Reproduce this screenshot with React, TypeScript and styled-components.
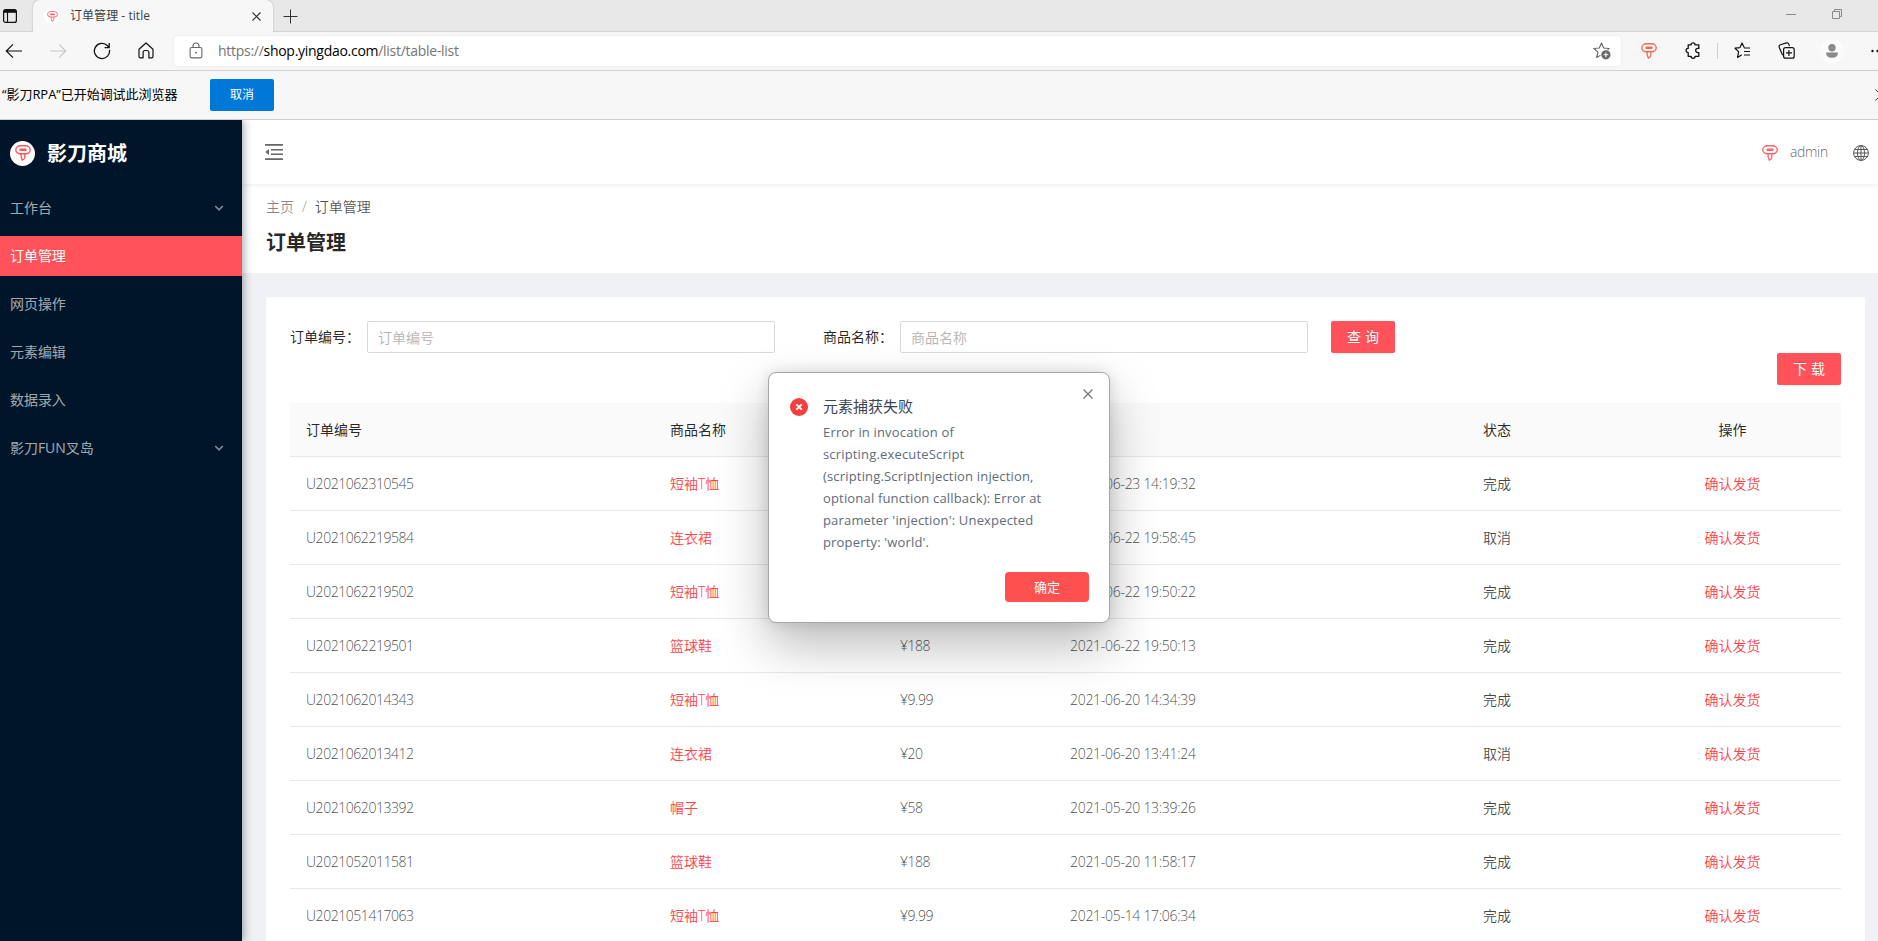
import React from 'react';
import styled, { createGlobalStyle, css } from 'styled-components';

const GlobalStyle = createGlobalStyle`
  *, *::before, *::after { box-sizing: border-box; }
  html, body { margin: 0; padding: 0; }
  body {
    width: 1878px;
    height: 941px;
    overflow: hidden;
    background: #fff;
    font-family: 'Open Sans', 'Noto Sans CJK SC', sans-serif;
    font-size: 14px;
    color: rgba(0, 0, 0, 0.65);
  }
  button { font: inherit; border: 0; padding: 0; margin: 0; }
  svg { display: block; flex: none; }
`;

const Window = styled.div`
  position: relative;
  display: flex;
  flex-direction: column;
  width: 1878px;
  height: 941px;
  overflow: hidden;
`;

/* ---------- browser chrome ---------- */

const TabStrip = styled.div`
  display: flex;
  align-items: center;
  height: 32px;
  flex: none;
  background: #e8e8e8;
  box-shadow: inset 0 -1px 0 #d3d3d3;
  padding-left: 3px;
`;

const Tab = styled.div`
  display: flex;
  align-items: center;
  width: 240px;
  height: 32px;
  margin-left: 16px;
  padding: 0 12px 0 11px;
  background: #f7f7f7;
  border-radius: 7px 7px 0 0;
  box-shadow: 0 0 2px rgba(0, 0, 0, 0.28);
  clip-path: inset(0 -3px 0 -3px);
`;

const TabIcon = styled.span`
  display: grid;
  place-items: center;
  width: 16px;
  height: 16px;
  border-radius: 50%;
  background: #fff;
`;

const TabTitle = styled.span`
  flex: 1;
  margin-left: 10px;
  font-size: 12px;
  line-height: 16px;
  letter-spacing: 0.05px;
  color: #3f3f3f;
`;

const NewTab = styled.span`
  margin-left: 10px;
`;

const WindowButtons = styled.div`
  display: flex;
  align-items: center;
  gap: 36px;
  margin-left: auto;
  margin-right: 36px;
  padding-bottom: 4px;
`;

const Toolbar = styled.div`
  display: flex;
  align-items: center;
  height: 39px;
  flex: none;
  padding: 0 0 1px 5px;
  background: #f7f7f7;
  border-bottom: 1px solid #d0d0d0;
`;

const NavButtons = styled.div`
  display: flex;
  align-items: center;
  gap: 26px;
  width: 169px;
  svg:last-child { margin-left: 1px; }
`;

const AddressBar = styled.div`
  display: flex;
  align-items: center;
  width: 1447px;
  height: 30px;
  padding: 0 10px 0 15px;
  border-radius: 4px;
  background: #fff;
  box-shadow: 0 0 3px rgba(0, 0, 0, 0.08);
`;

const Url = styled.span`
  flex: 1;
  margin-left: 15px;
  padding-top: 1px;
  font-size: 14px;
  line-height: 20px;
  letter-spacing: -0.28px;
  color: #757575;
  b { font-weight: 400; color: #000; }
`;

const ToolbarIcons = styled.div`
  display: flex;
  align-items: center;
  flex: 1;
  padding-left: 20px;
  overflow: hidden;
`;

const ToolSlot = styled.span<{ $w: number }>`
  display: flex;
  flex: none;
  width: ${(p) => p.$w}px;
`;

const Divider = styled.span`
  flex: none;
  width: 1px;
  height: 16px;
  margin-right: 16px;
  background: #cfcfcf;
`;

const Avatar = styled.span`
  display: grid;
  flex: none;
  place-items: center;
  width: 24px;
  height: 24px;
  margin-right: 27px;
  border-radius: 50%;
  background: #fbfbfb;
`;

const InfoBar = styled.div`
  display: flex;
  align-items: center;
  height: 49px;
  flex: none;
  padding: 0 0 1px 2px;
  background: #f7f7f7;
  border-bottom: 1px solid #cecece;
  overflow: hidden;
`;

const InfoText = styled.span`
  width: 208px;
  padding-bottom: 2px;
  font-size: 13px;
  line-height: 20px;
  letter-spacing: -0.05px;
  color: #000;
  white-space: nowrap;
`;

const StopButton = styled.button`
  width: 64px;
  height: 32px;
  padding-bottom: 2px;
  border-radius: 2px;
  background: #0078d7;
  color: #fff;
  font-size: 12px;
`;

const InfoClose = styled.span`
  margin-left: auto;
  margin-right: -9px;
`;

/* ---------- shop application ---------- */

const Shell = styled.div`
  display: flex;
  flex: 1;
  min-height: 0;
  overflow: hidden;
  font-weight: 350;
`;

const Sidebar = styled.aside`
  z-index: 1;
  flex: none;
  width: 242px;
  background: #001529;
  box-shadow: 2px 0 8px rgba(0, 21, 41, 0.35);
`;

const Brand = styled.div`
  display: flex;
  align-items: center;
  height: 64px;
  padding: 4px 0 0 10px;
  color: #fff;
  font-size: 20px;
  font-weight: 700;
  line-height: 28px;
`;

const BrandMark = styled.span`
  display: grid;
  place-items: center;
  width: 25px;
  height: 25px;
  margin: -2px 12px 0 0;
  border-radius: 50%;
  background: #fff;
`;

const MenuItem = styled.div<{ $active?: boolean }>`
  display: flex;
  align-items: center;
  justify-content: space-between;
  height: 40px;
  margin: 4px 0 8px;
  padding: 0 18px 0 10px;
  font-weight: 400;
  line-height: 22px;
  letter-spacing: -0.05px;
  color: rgba(255, 255, 255, 0.65);
  ${(p) => p.$active && css`
    color: #fff;
    background: #ff525b;
  `}
`;

const Main = styled.main`
  display: flex;
  flex-direction: column;
  flex: 1;
  min-width: 0;
  background: #f0f1f5;
`;

const Header = styled.header`
  z-index: 0;
  display: flex;
  align-items: center;
  flex: none;
  height: 64px;
  padding: 0 9px 0 23px;
  background: #fff;
  box-shadow: 0 1px 4px rgba(0, 21, 41, 0.08);
`;

const UserArea = styled.div`
  display: flex;
  align-items: center;
  margin-left: auto;
  padding-top: 1px;
`;

const UserName = styled.span`
  width: 38px;
  margin: 0 24px 0 12px;
  padding: 0 0 2px;
  box-sizing: content-box;
  line-height: 22px;
  letter-spacing: -0.35px;
  padding-right: 1px;
  white-space: nowrap;
`;

const PageHead = styled.div`
  flex: none;
  height: 89px;
  padding: 12px 24px;
  background: #fff;
`;

const Crumbs = styled.div`
  line-height: 22px;
  color: rgba(0, 0, 0, 0.47);
  i { margin: 0 8px; font-style: normal; }
  b { font-weight: 350; color: rgba(0, 0, 0, 0.7); }
`;

const PageTitle = styled.h1`
  margin: 9px 0 0;
  font-size: 20px;
  font-weight: 700;
  line-height: 32px;
  color: rgba(0, 0, 0, 0.85);
`;

const Card = styled.section`
  flex: 1;
  min-height: 0;
  margin: 24px 13px 0 24px;
  padding: 24px 24px 0;
  border-radius: 2px 2px 0 0;
  background: #fff;
  overflow: hidden;
`;

const Filters = styled.div`
  display: flex;
  height: 32px;
`;

const Field = styled.label`
  display: flex;
  align-items: center;
  width: 485px;
  margin-right: 48px;
  color: rgba(0, 0, 0, 0.85);
  line-height: 22px;
`;

const FieldLabel = styled.span`
  flex: none;
  width: 77px;
  font-weight: 400;
  white-space: nowrap;
`;

const Input = styled.input`
  flex: 1;
  min-width: 0;
  height: 32px;
  padding: 4px 10px;
  border: 1px solid #d9d9d9;
  border-radius: 2px;
  font: inherit;
  outline: none;
  &::placeholder { color: #b4b4b4; opacity: 1; }
`;

const PrimaryButton = styled.button`
  width: 64px;
  height: 32px;
  padding-bottom: 2px;
  border-radius: 2px;
  background: #ff525b;
  box-shadow: 0 2px 0 rgba(0, 0, 0, 0.04);
  color: #fff;
  font-weight: 400;
  letter-spacing: 4px;
  text-indent: 4px;
  text-shadow: 0 -1px 0 rgba(0, 0, 0, 0.12);
`;

const SearchSlot = styled.div`
  margin-left: -25px;
`;

const Actions = styled.div`
  display: flex;
  justify-content: flex-end;
  height: 50px;
`;

const Row = styled.div<{ $head?: boolean }>`
  display: grid;
  grid-template-columns: 364px 230px 170px 413px 157px 1fr;
  align-items: center;
  height: 54px;
  border-bottom: 1px solid #e8e8e8;
  line-height: 22px;
  color: rgba(0, 0, 0, 0.72);
  ${(p) => p.$head && css`
    background: #fafafa;
    border-radius: 2px 2px 0 0;
    color: rgba(0, 0, 0, 0.85);
    font-weight: 400;
  `}
`;

const Cell = styled.div<{ $link?: boolean; $center?: boolean; $track?: number }>`
  padding: 0 16px;
  text-align: ${(p) => (p.$center ? 'center' : 'left')};
  letter-spacing: ${(p) => p.$track || 0}px;
  ${(p) => p.$link && css`color: #ff424c;`}
`;

/* ---------- error dialog ---------- */

const Dialog = styled.div`
  position: absolute;
  z-index: 5;
  left: 768px;
  top: 372px;
  display: flex;
  flex-direction: column;
  width: 342px;
  height: 251px;
  padding: 22px 20px 20px 21px;
  border: 1px solid #a6a6a6;
  border-radius: 8px;
  background: #fff;
  box-shadow: 0 22px 50px rgba(0, 0, 0, 0.27), 0 0 14px rgba(0, 0, 0, 0.12);
`;

const DialogClose = styled.span`
  position: absolute;
  top: 16px;
  right: 16px;
`;

const DialogContent = styled.div`
  display: grid;
  grid-template-columns: 33px 1fr;
`;

const DialogMark = styled.span`
  padding-top: 3px;
`;

const DialogTitle = styled.div`
  height: 26px;
  font-size: 15px;
  line-height: 22px;
  color: #3c4452;
`;

const DialogText = styled.div`
  grid-column: 2;
  font-size: 13px;
  line-height: 22px;
  letter-spacing: 0.17px;
  color: #606b7c;
  white-space: pre;
`;

const ConfirmButton = styled.button`
  align-self: flex-end;
  width: 84px;
  height: 30px;
  margin-top: auto;
  padding-bottom: 2px;
  border-radius: 4px;
  background: #ff5050;
  color: #fff;
  font-size: 13px;
`;

/* ---------- icons ---------- */

const LogoIcon = ({ size = 16, color = '#ff6168' }: { size?: number; color?: string }) => (
  <svg width={size} height={size} viewBox="0 0 16 16" fill="none">
    <rect x="0.8" y="0.8" width="14.4" height="8" rx="4.6" ry="4" stroke={color} strokeWidth="1.4" />
    <rect x="4.5" y="3.5" width="7" height="2.6" rx="0.9" fill={color} />
    <path d="M6.1 8.6v2.6c0 1.700 1.100 2.400 1.300 4 1.500-.5 2.400-1.500 2.400-3V8.600" stroke={color} strokeWidth="1.3" />
  </svg>
);

const Cross = ({ size, color, width = 1.2 }: { size: number; color: string; width?: number }) => (
  <svg width={size} height={size} viewBox={`0 0 ${size} ${size}`} stroke={color} strokeWidth={width}>
    <path d={`M0.5 0.5L${size - 0.5} ${size - 0.5}M${size - 0.5} 0.5L0.5 ${size - 0.5}`} />
  </svg>
);

const TabMenuIcon = () => (
  <svg width="14" height="14" viewBox="0 0 14 14" fill="none" stroke="#111">
    <rect x="0.6" y="0.6" width="12.8" height="12.8" rx="2" strokeWidth="1.2" />
    <path d="M1 2.3h12" strokeWidth="3" />
    <path d="M4.5 3v10.5" strokeWidth="1.1" />
  </svg>
);

const PlusIcon = () => (
  <svg width="15" height="15" viewBox="0 0 15 15" stroke="#333">
    <path d="M7.5 0.5v14M0.5 7.5h14" />
  </svg>
);

const MinimizeIcon = () => (
  <svg width="10" height="10" viewBox="0 0 10 10" stroke="#8a8a8a">
    <path d="M0 5.5h10" />
  </svg>
);

const RestoreIcon = () => (
  <svg width="10" height="10" viewBox="0 0 10 10" fill="none" stroke="#8a8a8a">
    <path d="M0.5 2.5h7v7h-7zM2.5 2.5v-2h7v7h-2" />
  </svg>
);

const ArrowIcon = ({ color, flip }: { color: string; flip?: boolean }) => (
  <svg width="18" height="16" viewBox="0 0 18 16" fill="none" stroke={color} strokeWidth="1.2">
    <path d={flip ? 'M1 8h15.6M10 1.3L16.7 8 10 14.7' : 'M17 8H1.4M8 1.3L1.3 8 8 14.7'} />
  </svg>
);

const ReloadIcon = () => (
  <svg width="18" height="18" viewBox="0 0 18 18" fill="none" stroke="#111" strokeWidth="1.3">
    <path d="M16.5 7.8A7.6 7.6 0 1 1 14.5 3.7l1.5 1.7M16.2 1v4.6h-4.6" />
  </svg>
);

const HomeIcon = () => (
  <svg width="16" height="17" viewBox="0 0 16 17" fill="none" stroke="#111" strokeWidth="1.2" strokeLinejoin="round">
    <path d="M1 7.2L8 1l7 6.2v7.3a1.3 1.3 0 0 1-1.3 1.3h-2.8V10.5a2 2 0 0 0-2-2H7.1a2 2 0 0 0-2 2v5.3H2.3A1.3 1.3 0 0 1 1 14.5z" />
  </svg>
);

const LockIcon = () => (
  <svg width="14" height="17" viewBox="0 0 14 17" fill="none" stroke="#666" strokeWidth="1.1">
    <rect x="1.1" y="5.5" width="11.8" height="10.4" rx="1.6" />
    <path d="M4 5.5V4a3 3 0 0 1 6 0v1.5" />
    <circle cx="7" cy="10.7" r="0.9" fill="#666" stroke="none" />
  </svg>
);

const StarAddIcon = () => (
  <svg width="18" height="18" viewBox="0 0 18 18">
    <path
      d="M8.500 1l2.200 5 5.500.5-4.200 3.600 1.300 5.400-4.800-2.900-4.800 2.900L5 10.100.8 6.500l5.500-.5z"
      fill="none"
      stroke="#666"
      strokeWidth="1.1"
      strokeLinejoin="round"
    />
    <circle cx="12.900" cy="12.800" r="5.500" fill="#fff" />
    <circle cx="12.900" cy="12.800" r="4.600" fill="#666" />
    <path d="M12.900 10.400v4.800M10.500 12.800h4.800" stroke="#fff" strokeWidth="1.1" />
  </svg>
);

const PuzzleIcon = () => (
  <svg width="16" height="17" viewBox="0 0 16 17" fill="none" stroke="#111" strokeWidth="1.3" strokeLinejoin="round">
    <path d="M3.200 2.800h2.900a2 2 0 0 1 4 0h3.700v3.600h-1a2.100 2.100 0 0 0 0 4.200h1v3.700h-3.700a2 2 0 0 1-4 0H3.200v-3.700a2.100 2.100 0 0 1 0-4.200z" />
  </svg>
);

const FavoritesIcon = () => (
  <svg width="17" height="17" viewBox="0 0 17 17" fill="none" stroke="#111" strokeWidth="1.2" strokeLinejoin="round">
    <path d="M10.200 5.400L8 1 6 5.600l-5 .6 3.600 3.400-1 5.800 4.200-2.700M10 6h6M10 9.500h6M10 13h6" />
  </svg>
);

const CollectionsIcon = () => (
  <svg width="17" height="17" viewBox="0 0 17 17" fill="none" stroke="#111" strokeWidth="1.2">
    <rect x="5.600" y="5.600" width="10.600" height="10.600" rx="2" />
    <path d="M10.900 8v6M8 10.900h6M4.600 13.200L1.200 5.200a1.900 1.900 0 0 1 1.200-2.500L8.600.9a1.900 1.900 0 0 1 2.200 1.200l.7 1.900" />
  </svg>
);

const PersonIcon = () => (
  <svg width="12" height="14" viewBox="0 0 12 14" fill="#8a8a8a">
    <circle cx="6" cy="3.700" r="3.700" />
    <path d="M.2 8.600h11.600v.8c0 2.800-2.600 4.400-5.800 4.400S.2 12.200.2 9.400z" />
  </svg>
);

const MoreIcon = () => (
  <svg width="14" height="4" viewBox="0 0 14 4" fill="#111">
    <circle cx="1.5" cy="2" r="1.2" />
    <circle cx="6.5" cy="2" r="1.2" />
    <circle cx="11.5" cy="2" r="1.2" />
  </svg>
);

const Chevron = () => (
  <svg width="10" height="7" viewBox="0 0 10 7" fill="none" stroke="rgba(255,255,255,0.5)" strokeWidth="1.6">
    <path d="M1.2 1L5 4.8 8.8 1" />
  </svg>
);

const FoldIcon = () => (
  <svg width="18" height="16" viewBox="0 0 18 16" fill="#666">
    <path d="M0 0h18v1.700H0zM6 4.900h12v1.600H6zM6 9.500h12v1.600H6zM0 14.300h18V16H0zM.3 8l3.700-3v6z" />
  </svg>
);

const GlobeIcon = () => (
  <svg width="16" height="16" viewBox="0 0 16 16" fill="none" stroke="#555" strokeWidth="1">
    <circle cx="8" cy="8" r="7.400" />
    <ellipse cx="8" cy="8" rx="3.500" ry="7.400" />
    <path d="M8 .8v14.400M.8 8h14.400M1.500 4.500h13M1.500 11.500h13" />
  </svg>
);

const ErrorIcon = () => (
  <svg width="18" height="18" viewBox="0 0 18 18">
    <circle cx="9" cy="9" r="9" fill="#f53f3f" />
    <path d="M6.300 6.300l5.400 5.400M11.700 6.300l-5.400 5.400" stroke="#fff" strokeWidth="1.900" />
  </svg>
);

/* ---------- data ---------- */

const MENU = [
  { label: '工作台', expandable: true },
  { label: '订单管理', active: true },
  { label: '网页操作' },
  { label: '元素编辑' },
  { label: '数据录入' },
  { label: '影刀FUN叉岛', expandable: true },
];

const ORDERS = [
  ['U2021062310545', '短袖T恤', '¥9.99', '2021-06-23 14:19:32', '完成'],
  ['U2021062219584', '连衣裙', '¥20', '2021-06-22 19:58:45', '取消'],
  ['U2021062219502', '短袖T恤', '¥9.99', '2021-06-22 19:50:22', '完成'],
  ['U2021062219501', '篮球鞋', '¥188', '2021-06-22 19:50:13', '完成'],
  ['U2021062014343', '短袖T恤', '¥9.99', '2021-06-20 14:34:39', '完成'],
  ['U2021062013412', '连衣裙', '¥20', '2021-06-20 13:41:24', '取消'],
  ['U2021062013392', '帽子', '¥58', '2021-05-20 13:39:26', '完成'],
  ['U2021052011581', '篮球鞋', '¥188', '2021-05-20 11:58:17', '完成'],
  ['U2021051417063', '短袖T恤', '¥9.99', '2021-05-14 17:06:34', '完成'],
];

const ERROR_TEXT = `Error in invocation of
scripting.executeScript
(scripting.ScriptInjection injection,
optional function callback): Error at
parameter 'injection': Unexpected
property: 'world'.`;

export default function App() {
  return (
    <Window>
      <GlobalStyle />
      <TabStrip>
        <TabMenuIcon />
        <Tab>
          <TabIcon><LogoIcon size={11} /></TabIcon>
          <TabTitle>订单管理 - title</TabTitle>
          <Cross size={9} color="#333" />
        </Tab>
        <NewTab><PlusIcon /></NewTab>
        <WindowButtons>
          <MinimizeIcon />
          <RestoreIcon />
        </WindowButtons>
      </TabStrip>
      <Toolbar>
        <NavButtons>
          <ArrowIcon color="#111" />
          <ArrowIcon color="#c8c8c8" flip />
          <ReloadIcon />
          <HomeIcon />
        </NavButtons>
        <AddressBar>
          <LockIcon />
          <Url>https://<b>shop.yingdao.com</b>/list/table-list</Url>
          <StarAddIcon />
        </AddressBar>
        <ToolbarIcons>
          <ToolSlot $w={44}><LogoIcon color="#ee6a50" /></ToolSlot>
          <ToolSlot $w={32}><PuzzleIcon /></ToolSlot>
          <Divider />
          <ToolSlot $w={44}><FavoritesIcon /></ToolSlot>
          <ToolSlot $w={42}><CollectionsIcon /></ToolSlot>
          <Avatar><PersonIcon /></Avatar>
          <MoreIcon />
        </ToolbarIcons>
      </Toolbar>
      <InfoBar>
        <InfoText>“影刀RPA”已开始调试此浏览器</InfoText>
        <StopButton>取消</StopButton>
        <InfoClose><Cross size={12} color="#333" width={1} /></InfoClose>
      </InfoBar>

      <Shell>
        <Sidebar>
          <Brand>
            <BrandMark><LogoIcon size={16} color="#ff525b" /></BrandMark>
            影刀商城
          </Brand>
          {MENU.map((item) => (
            <MenuItem key={item.label} $active={item.active}>
              {item.label}
              {item.expandable && <Chevron />}
            </MenuItem>
          ))}
        </Sidebar>

        <Main>
          <Header>
            <FoldIcon />
            <UserArea>
              <LogoIcon />
              <UserName>admin</UserName>
              <GlobeIcon />
            </UserArea>
          </Header>
          <PageHead>
            <Crumbs>主页<i>/</i><b>订单管理</b></Crumbs>
            <PageTitle>订单管理</PageTitle>
          </PageHead>
          <Card>
            <Filters>
              <Field><FieldLabel>订单编号：</FieldLabel><Input placeholder="订单编号" /></Field>
              <Field><FieldLabel>商品名称：</FieldLabel><Input placeholder="商品名称" /></Field>
              <SearchSlot><PrimaryButton>查询</PrimaryButton></SearchSlot>
            </Filters>
            <Actions><PrimaryButton>下载</PrimaryButton></Actions>
            <Row $head>
              <Cell>订单编号</Cell>
              <Cell>商品名称</Cell>
              <Cell />
              <Cell />
              <Cell>状态</Cell>
              <Cell $center>操作</Cell>
            </Row>
            {ORDERS.map(([id, product, price, time, status]) => (
              <Row key={id}>
                <Cell $track={-0.45}>{id}</Cell>
                <Cell $link>{product}</Cell>
                <Cell $track={-0.45}>{price}</Cell>
                <Cell $track={-0.29}>{time}</Cell>
                <Cell>{status}</Cell>
                <Cell $link $center>确认发货</Cell>
              </Row>
            ))}
          </Card>
        </Main>
      </Shell>

      <Dialog role="alertdialog">
        <DialogClose><Cross size={10} color="#777" width={1.3} /></DialogClose>
        <DialogContent>
          <DialogMark><ErrorIcon /></DialogMark>
          <DialogTitle>元素捕获失败</DialogTitle>
          <DialogText>{ERROR_TEXT}</DialogText>
        </DialogContent>
        <ConfirmButton>确定</ConfirmButton>
      </Dialog>
    </Window>
  );
}
